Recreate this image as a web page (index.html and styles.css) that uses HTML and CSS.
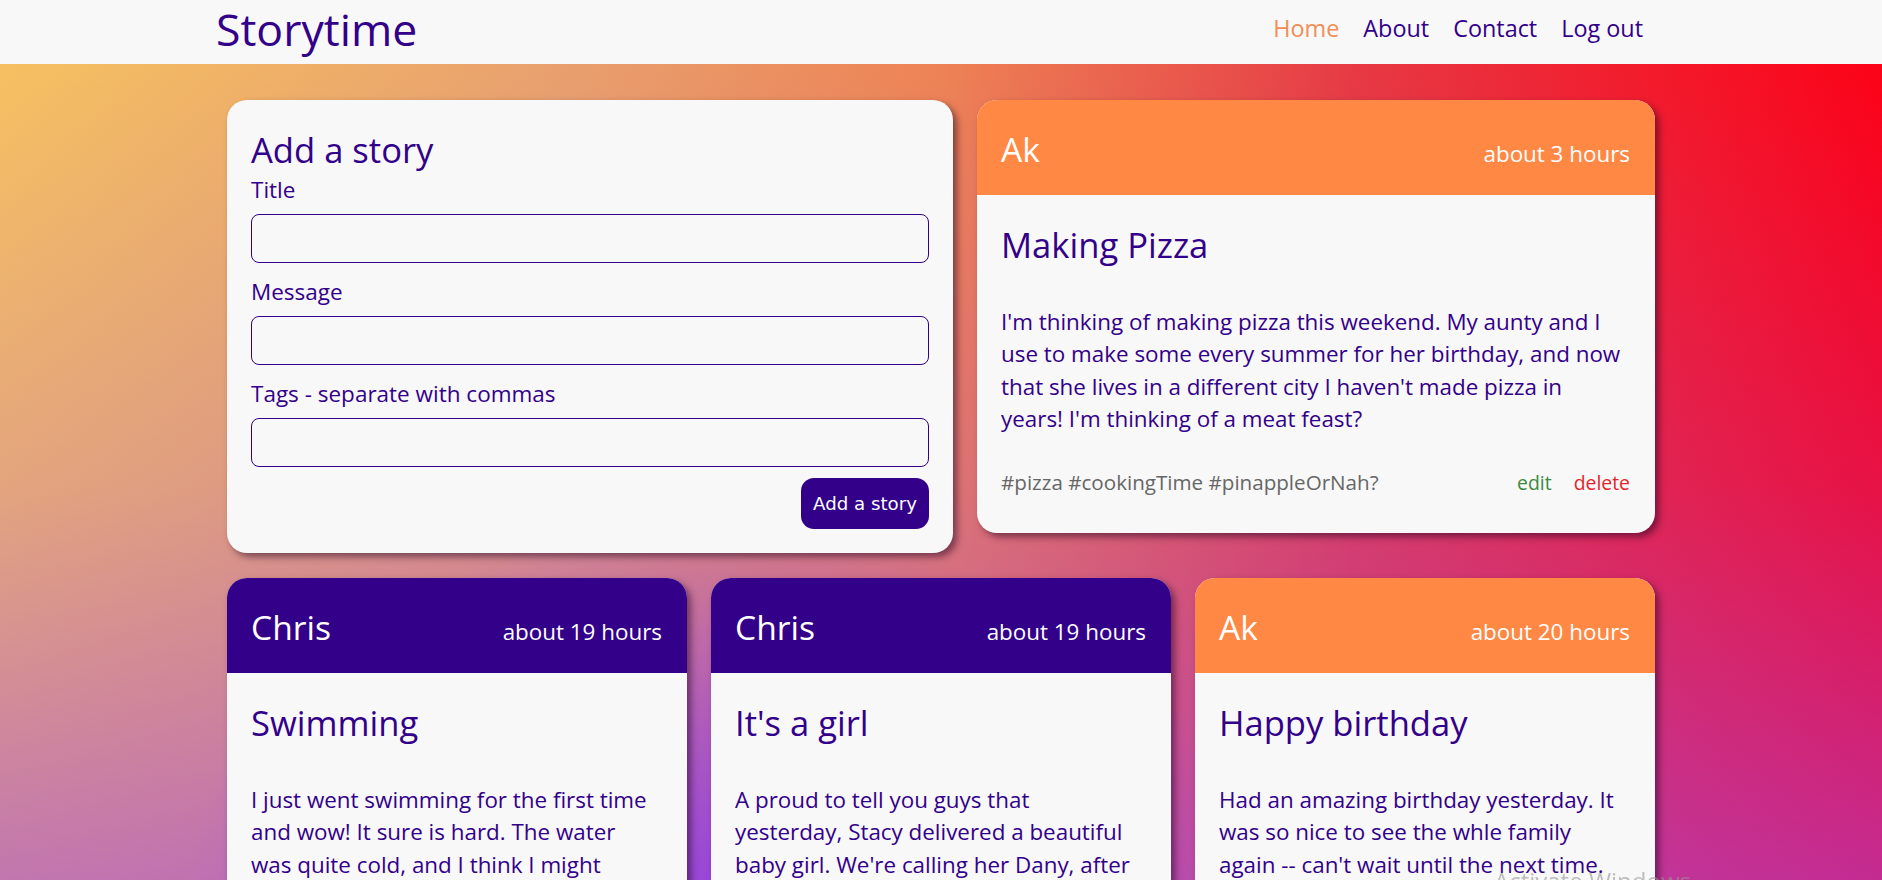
FILE: index.html
```html
<!DOCTYPE html>
<html lang="en">
<head>
<meta charset="utf-8">
<title>Storytime</title>
<link rel="stylesheet" href="styles.css">
</head>
<body>
<header class="navbar">
  <div class="nav-inner">
    <a class="brand" href="#">Storytime</a>
    <nav class="nav-links">
      <a class="nav-link active" href="#">Home</a>
      <a class="nav-link" href="#">About</a>
      <a class="nav-link" href="#">Contact</a>
      <a class="nav-link" href="#">Log out</a>
    </nav>
  </div>
</header>

<main class="container">
  <section class="row row-top">
    <form class="card form-card">
      <h2 class="form-title">Add a story</h2>
      <label class="field-label" for="title">Title</label>
      <input class="field-input" id="title" type="text">
      <label class="field-label" for="message">Message</label>
      <input class="field-input" id="message" type="text">
      <label class="field-label" for="tags">Tags - separate with commas</label>
      <input class="field-input" id="tags" type="text">
      <div class="form-actions">
        <button class="btn-add" type="button">Add a story</button>
      </div>
    </form>

    <article class="card story">
      <div class="story-head head-orange">
        <h3 class="story-author">Ak</h3>
        <span class="story-time">about 3 hours</span>
      </div>
      <div class="story-body">
        <h2 class="story-title">Making Pizza</h2>
        <p class="story-text">I'm thinking of making pizza this weekend. My aunty and I<br>use to make some every summer for her birthday, and now<br>that she lives in a different city I haven't made pizza in<br>years! I'm thinking of a meat feast?</p>
        <div class="story-foot">
          <span class="story-tags">#pizza #cookingTime #pinappleOrNah?</span>
          <span class="story-actions"><a class="act-edit" href="#">edit</a><a class="act-delete" href="#">delete</a></span>
        </div>
      </div>
    </article>
  </section>

  <section class="row row-three">
    <article class="card story">
      <div class="story-head head-purple">
        <h3 class="story-author">Chris</h3>
        <span class="story-time">about 19 hours</span>
      </div>
      <div class="story-body">
        <h2 class="story-title">Swimming</h2>
        <p class="story-text">I just went swimming for the first time<br>and wow! It sure is hard. The water<br>was quite cold, and I think I might<br>need some lessons before I go again.</p>
        <div class="story-foot">
          <span class="story-tags">#swimming #sport</span>
        </div>
      </div>
    </article>

    <article class="card story">
      <div class="story-head head-purple">
        <h3 class="story-author">Chris</h3>
        <span class="story-time">about 19 hours</span>
      </div>
      <div class="story-body">
        <h2 class="story-title">It's a girl</h2>
        <p class="story-text">A proud to tell you guys that<br>yesterday, Stacy delivered a beautiful<br>baby girl. We're calling her Dany, after<br>her grandmother.</p>
        <div class="story-foot">
          <span class="story-tags">#baby #family</span>
        </div>
      </div>
    </article>

    <article class="card story">
      <div class="story-head head-orange">
        <h3 class="story-author">Ak</h3>
        <span class="story-time">about 20 hours</span>
      </div>
      <div class="story-body">
        <h2 class="story-title">Happy birthday</h2>
        <p class="story-text">Had an amazing birthday yesterday. It<br>was so nice to see the whle family<br>again -- can't wait until the next time.</p>
        <div class="story-foot">
          <span class="story-tags">#birthday #family</span>
          <span class="story-actions"><a class="act-edit" href="#">edit</a><a class="act-delete" href="#">delete</a></span>
        </div>
      </div>
    </article>
  </section>
</main>

<div class="os-watermark">Activate Windows</div>
</body>
</html>
```

FILE: styles.css
```css
* { box-sizing: border-box; }

html, body {
  margin: 0;
  padding: 0;
}

body {
  font-family: "Open Sans", "Noto Sans", sans-serif;
  color: #33008a;
  min-height: 100vh;
  background-color: #e04060;
  background-image:
    radial-gradient(ellipse 28% 40% at 38% 100%, rgba(140, 60, 230, 0.75), rgba(140, 60, 230, 0) 100%),
    linear-gradient(to bottom, rgba(160, 70, 225, 0) 0%, rgba(160, 70, 225, 0.25) 55%, rgba(160, 70, 225, 0.62) 100%),
    linear-gradient(to right, #f9c55c 0%, #eba36a 30%, #f08550 50%, #e9393e 72%, #ff0010 100%);
  background-attachment: fixed;
  overflow: hidden;
}

a { text-decoration: none; }

/* ---------- navbar ---------- */
.navbar {
  background: #f8f8f8;
  height: 64px;
}

.nav-inner {
  width: 1452px;
  margin: 0 auto;
  padding-right: 12px;
  display: flex;
  justify-content: space-between;
  align-items: flex-start;
}

.brand {
  color: #33008a;
  font-size: 44.6px;
  line-height: 58px;
  padding-left: 1px;
}

.nav-links {
  display: flex;
  padding-top: 13px;
}

.nav-link {
  color: #33008a;
  font-size: 23.4px;
  line-height: 30px;
  padding: 0 12px;
}

.nav-link.active { color: #f28d55; }

/* ---------- layout ---------- */
.container {
  width: 1428px;
  margin: 36px auto 0;
}

.row {
  display: grid;
  gap: 24px;
  align-items: start;
}

.row-top { grid-template-columns: 726fr 678fr; }

.row-three {
  grid-template-columns: repeat(3, 1fr);
  margin-top: 25px;
}

/* ---------- cards ---------- */
.card {
  background: #f8f8f8;
  border-radius: 20px;
  box-shadow: 4px 4px 7px rgba(30, 0, 30, 0.5);
  overflow: hidden;
}

.form-card {
  display: flex;
  flex-direction: column;
  padding: 26px 24px 24px;
}

.form-title {
  margin: 0;
  font-size: 34.6px;
  font-weight: 400;
  line-height: 48px;
}

.field-label {
  font-size: 22.5px;
  line-height: 32px;
}

.field-input {
  display: block;
  width: 100%;
  height: 49px;
  margin: 8px 0 13px;
  border: 1px solid #33008a;
  border-radius: 8px;
  background: #f8f8f8;
  font: inherit;
}

.form-actions {
  display: flex;
  justify-content: flex-end;
  margin-top: -2px;
}

.btn-add {
  height: 51px;
  padding: 0 12px;
  border: none;
  border-radius: 13px;
  background: #33008a;
  color: #fff;
  font-family: "DejaVu Sans", "Open Sans", sans-serif;
  font-size: 18.2px;
}

.story-head {
  display: flex;
  justify-content: space-between;
  align-items: baseline;
  padding: 24px 25px 21px 24px;
  color: #fff;
}

.head-orange { background: #ff8844; }
.head-purple { background: #33008a; }

.story-author {
  margin: 0;
  font-size: 33.6px;
  font-weight: 400;
  line-height: 50px;
}

.story-time {
  font-size: 22.4px;
  line-height: 30px;
}

.story-body {
  padding: 25px 25px 34px 24px;
}

.story-title {
  margin: 0;
  font-size: 34.6px;
  font-weight: 400;
  line-height: 50px;
}

.story-text {
  margin: 36px 0 30px;
  font-size: 22.4px;
  line-height: 32.4px;
}

.story-foot {
  display: flex;
  justify-content: space-between;
  align-items: baseline;
  font-size: 19.4px;
  line-height: 32.4px;
}

.story-tags {
  color: #666;
  font-size: 20.6px;
}

.story-actions {
  display: flex;
  gap: 22px;
}

.act-edit { color: #3b8a3e; }
.act-delete { color: #e3262a; }

/* OS overlay visible at the bottom edge of the capture */
.os-watermark {
  position: fixed;
  left: 1494px;
  top: 866px;
  font-size: 24px;
  line-height: 30px;
  color: rgba(150, 150, 150, 0.6);
  pointer-events: none;
  white-space: nowrap;
}
```
